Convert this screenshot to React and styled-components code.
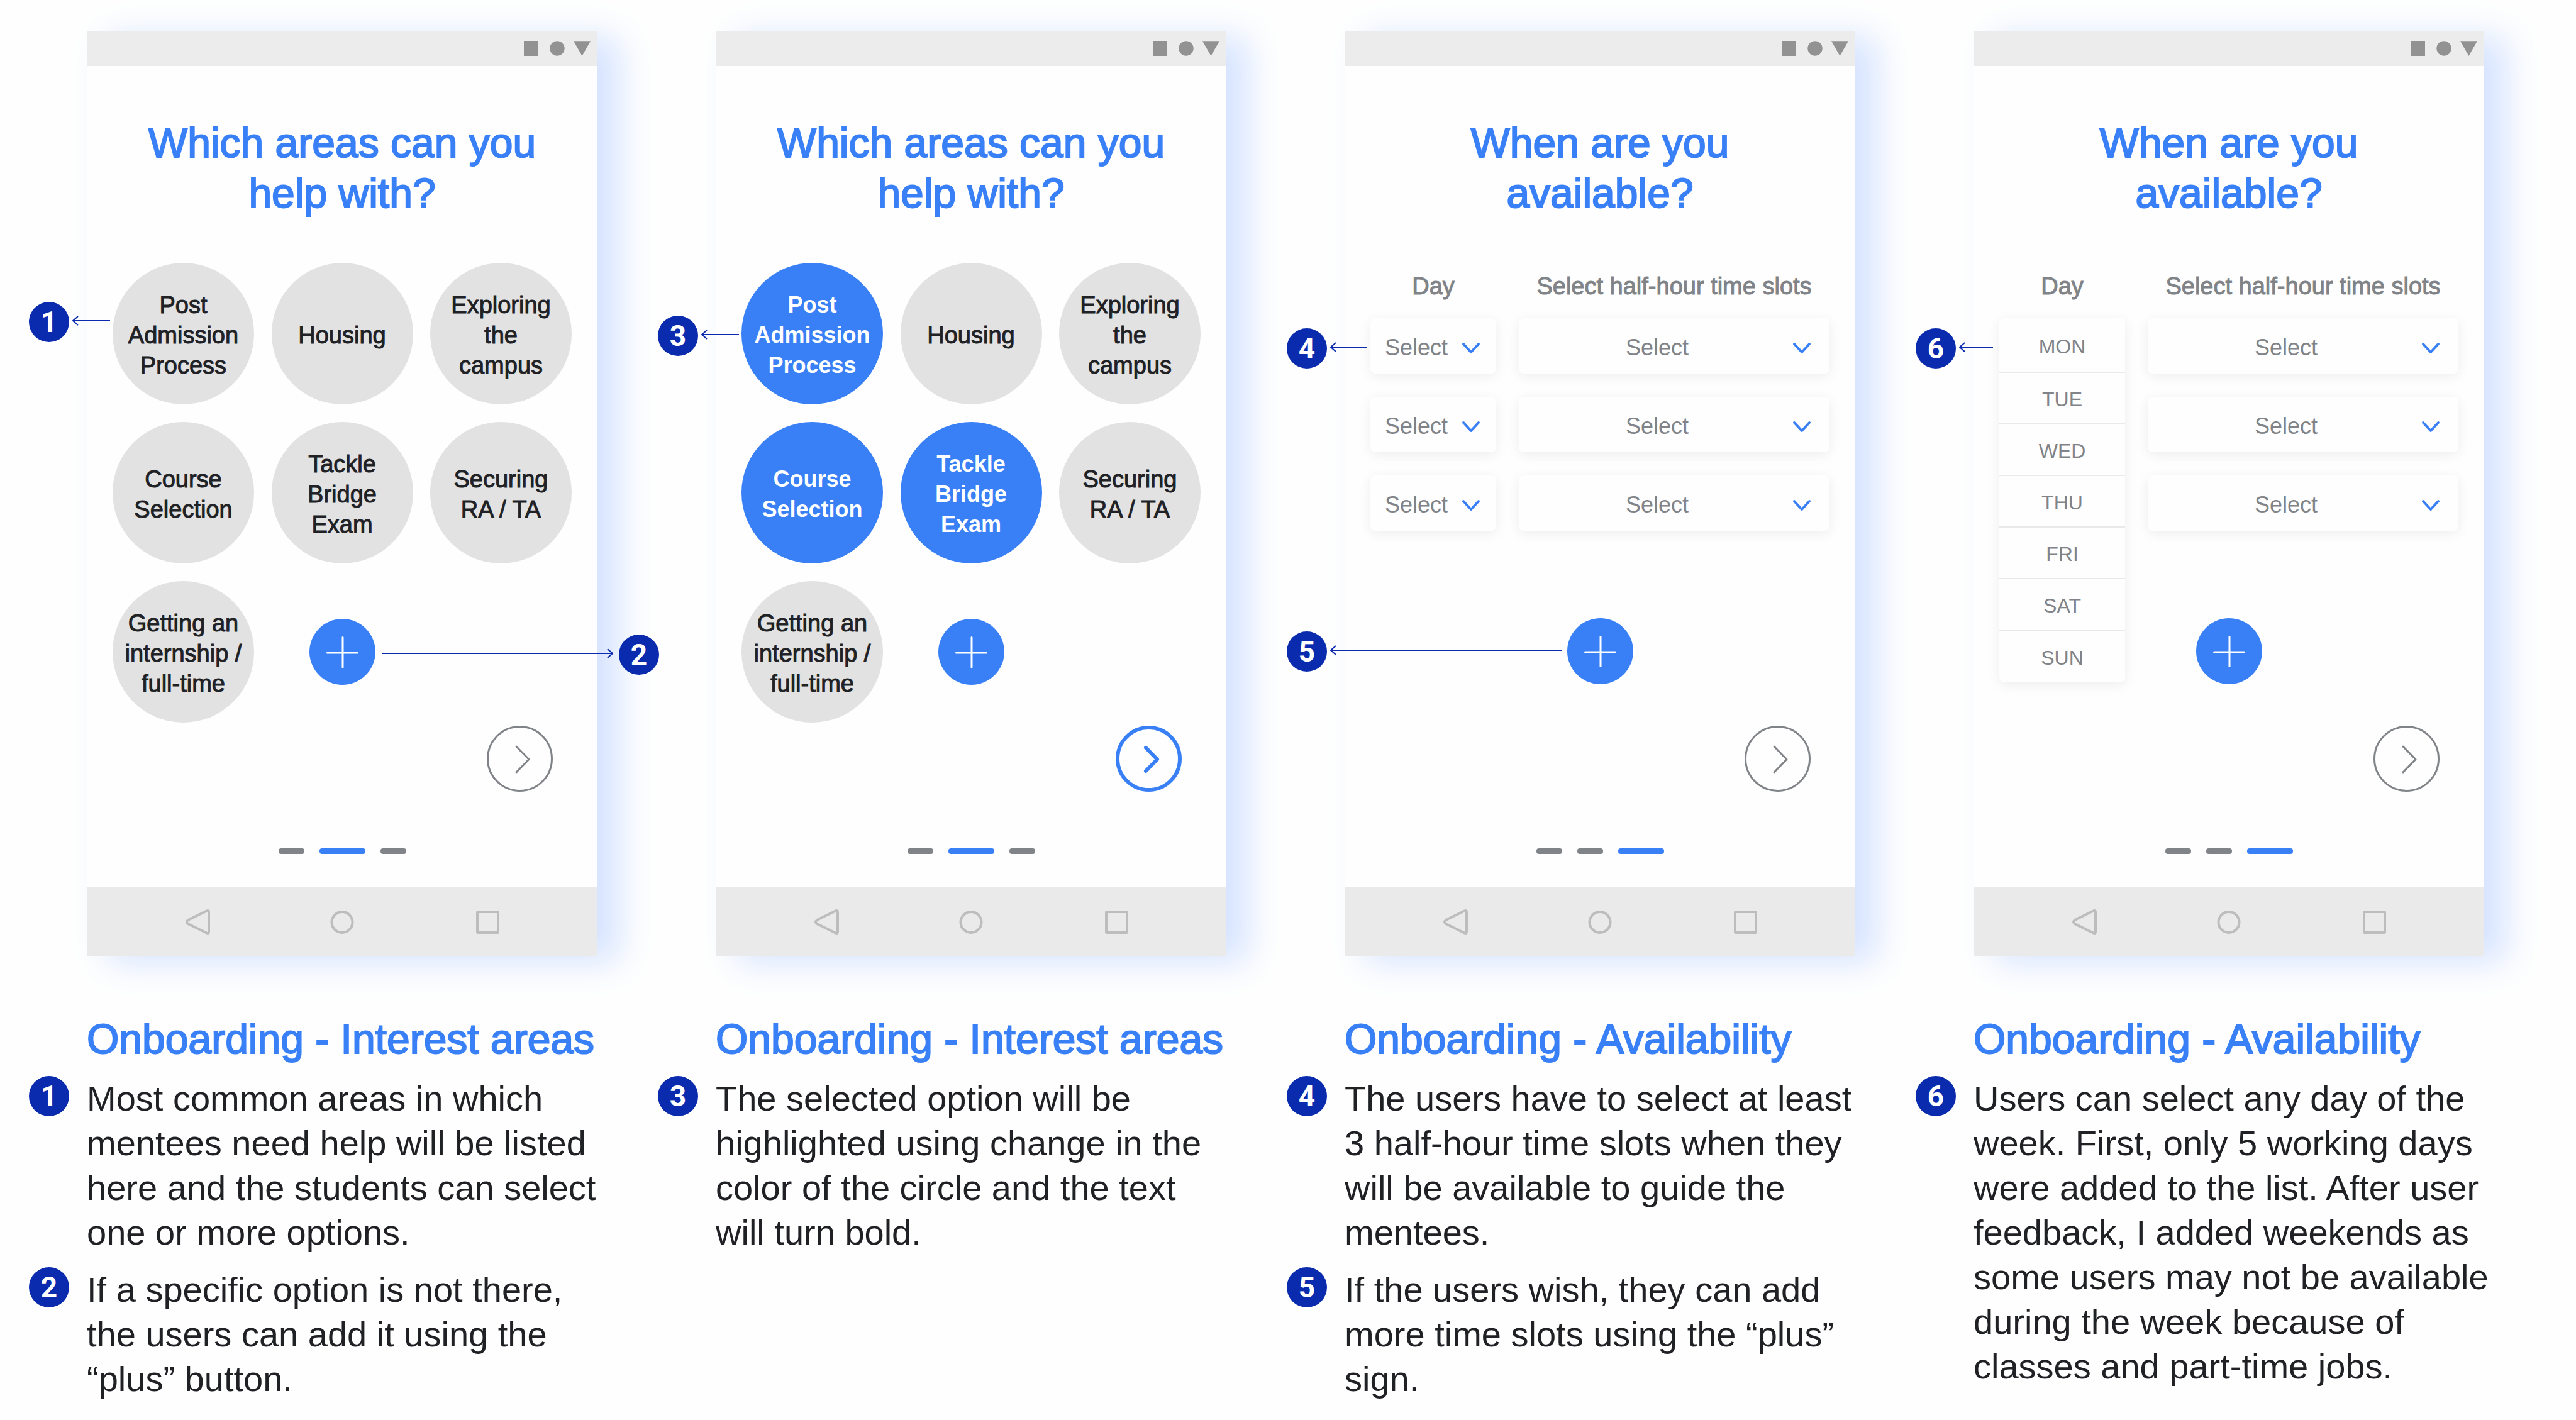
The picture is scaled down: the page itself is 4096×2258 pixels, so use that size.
import React from "react";
import styled, { createGlobalStyle, css } from "styled-components";

const blue = "#3980f7";
const navy = "#0a2bae";
const ink = "#202125";
const gray = "#808387";

const GlobalStyle = createGlobalStyle`
  *, *::before, *::after { box-sizing: border-box; }
  html, body { margin: 0; background: #fefefe; }
  body {
    font-family: "Liberation Sans", Arial, Helvetica, sans-serif;
    color: ${ink};
  }
  h1, h2, p, ul, ol { margin: 0; padding: 0; }
  ul, ol { list-style: none; }
  button, select { font: inherit; color: inherit; margin: 0; }
`;

/* Medium weight: the family only ships regular and bold. */
const medium = css`
  font-weight: 400;
  -webkit-text-stroke: ${(p) => p.$stroke || 1}px currentColor;
`;

const Page = styled.main`
  display: grid;
  grid-template-columns: repeat(4, minmax(0, 1fr));
  column-gap: 96px;
  padding: 49px 146px 20px 46px;
  overflow: hidden;
`;

const Column = styled.section`
  min-width: 0;
`;

const Mock = styled.div`
  position: relative;
  padding-left: 92px;
`;

const Phone = styled.article`
  display: flex;
  flex-direction: column;
  background: #fefefe;
  box-shadow: 34px 10px 52px #d5e3ff;
`;

const StatusBar = styled.div`
  display: flex;
  justify-content: flex-end;
  align-items: center;
  height: 56px;
  padding-right: 11px;
  background: #ececec;
`;

const Screen = styled.div`
  display: flex;
  flex-direction: column;
  padding: 82px 41px 53px;
`;

const ScreenTitle = styled.h1`
  ${medium}
  align-self: center;
  max-width: 640px;
  font-size: 66px;
  line-height: 80px;
  text-align: center;
  color: ${blue};
`;

const AreaGrid = styled.div`
  display: grid;
  grid-template-columns: repeat(3, 225px);
  grid-auto-rows: 225px;
  justify-content: space-between;
  place-items: center;
  row-gap: 28px;
  margin: 71px 0 5px;
`;

const Area = styled.button`
  ${medium}
  display: flex;
  align-items: center;
  justify-content: center;
  width: 225px;
  height: 225px;
  padding: 4px 10px 0;
  border: 0;
  border-radius: 50%;
  background: #e2e2e2;
  color: ${ink};
  font-size: 38px;
  line-height: 48px;
  text-align: center;
  white-space: pre;
  ${(p) =>
    p.$selected &&
    css`
      background: ${blue};
      color: #fff;
      font-size: 36px;
      font-weight: 700;
      -webkit-text-stroke: 0;
    `}
`;

const AddButton = styled.button`
  display: grid;
  place-items: center;
  width: 105px;
  height: 105px;
  padding: 0;
  border: 0;
  border-radius: 50%;
  background: ${blue};
`;

const NextButton = styled.button`
  display: grid;
  place-items: center;
  align-self: flex-end;
  width: 105px;
  height: 105px;
  margin-right: 30px;
  padding: 0 0 0 8px;
  border: ${(p) => (p.$active ? 6 : 3)}px solid ${(p) => (p.$active ? blue : gray)};
  border-radius: 50%;
  background: transparent;
  color: ${(p) => (p.$active ? blue : gray)};
`;

const Steps = styled.ol`
  display: flex;
  justify-content: center;
  gap: 24px;
  margin-top: 90px;
`;

const Step = styled.li`
  width: ${(p) => (p.$current ? 73 : 41)}px;
  height: 9px;
  border-radius: 4px;
  background: ${(p) => (p.$current ? blue : gray)};
`;

const NavBar = styled.nav`
  display: flex;
  justify-content: center;
  align-items: center;
  gap: 186px;
  height: 109px;
  background: #eaeaea;
`;

const NavButton = styled.button`
  display: grid;
  place-items: center;
  width: 44px;
  height: 44px;
  padding: 0;
  border: 0;
  background: none;
`;

const SlotForm = styled.form`
  display: grid;
  grid-template-columns: 200px 1fr;
  gap: 37px 36px;
  margin-top: 86px;
`;

const FieldLabel = styled.label`
  ${medium}
  margin-bottom: -8px;
  font-size: 38px;
  line-height: 44px;
  text-align: center;
  color: ${gray};
`;

const Field = styled.div`
  position: relative;
  height: 88px;
`;

const card = css`
  background: #fefefe;
  border: 0;
  border-radius: 8px;
  box-shadow: 0 4px 20px rgba(0, 0, 0, 0.07);
`;

const SelectBox = styled.select`
  ${card}
  appearance: none;
  width: 100%;
  height: 100%;
  padding: 5px 54px 0 0;
  font-size: 36px;
  line-height: 44px;
  text-align: center;
  text-align-last: center;
  color: ${gray};
`;

const FieldChevron = styled.svg`
  position: absolute;
  top: 37px;
  right: ${(p) => (p.$wide ? 28 : 24)}px;
  pointer-events: none;
`;

const DayMenu = styled.ul`
  ${card}
  position: absolute;
  top: 0;
  left: 0;
  right: 0;
  overflow: hidden;
`;

const DayItem = styled.li`
  height: 82px;
  border-bottom: 2px solid #e9e9ea;
  &:first-child { height: 87px; }
  &:last-child { border-bottom: 0; }
`;

const DayButton = styled.button`
  width: 100%;
  height: 100%;
  padding: 4px 0 0;
  border: 0;
  background: none;
  font-size: 32px;
  line-height: 40px;
  color: ${gray};
`;

const AddRow = styled.div`
  display: flex;
  justify-content: center;
  padding: 139px 0 66px;
`;

const Badge = styled.span`
  display: grid;
  place-items: center;
  flex: none;
  width: 64px;
  height: 64px;
  border-radius: 50%;
  background: ${navy};
  color: #fff;
  font-family: Roboto, "Liberation Sans", sans-serif;
  font-size: 46px;
  font-weight: 700;
  line-height: 64px;
`;

const CalloutBox = styled.div`
  position: absolute;
  top: ${(p) => p.$top}px;
  left: ${(p) => p.$left || 0}px;
  display: flex;
  flex-direction: ${(p) => (p.$reverse ? "row-reverse" : "row")};
  align-items: center;
  gap: ${(p) => (p.$reverse ? 9 : 5)}px;
  z-index: 2;
`;

const ArrowLine = styled.svg`
  margin-bottom: 4px;
`;

const Caption = styled.h2`
  ${medium}
  margin: 92px 0 19px 92px;
  font-size: 66px;
  line-height: 80px;
  white-space: nowrap;
  color: ${blue};
`;

const Notes = styled.ol`
  display: grid;
  gap: 20px;
`;

const Note = styled.li`
  display: grid;
  grid-template-columns: 64px 1fr;
  column-gap: 28px;
  align-items: start;
`;

const NoteText = styled.p`
  margin-right: -8px;
  font-size: 56px;
  line-height: 71px;
`;

function StatusIcons() {
  return (
    <svg width="106" height="24" viewBox="0 0 106 24" fill="#929292" aria-hidden="true">
      <rect x="0" y="0" width="23" height="24" />
      <circle cx="53" cy="12" r="11.7" />
      <path d="M79 0.3h27L92.5 24z" />
    </svg>
  );
}

function Arrow({ length, flip }) {
  return (
    <ArrowLine
      width={length}
      height="16"
      viewBox={`0 0 ${length} 16`}
      fill="none"
      stroke={navy}
      strokeWidth="2"
      aria-hidden="true"
    >
      {flip ? (
        <path d={`M0 8H${length - 1}M${length - 9} 1l8 7l-8 7`} />
      ) : (
        <path d={`M${length} 8H1M9 1L1 8l8 7`} />
      )}
    </ArrowLine>
  );
}

function Callout({ number, top, length, left, reverse }) {
  return (
    <CalloutBox $top={top} $left={left} $reverse={reverse}>
      <Badge>{number}</Badge>
      <Arrow length={length} flip={reverse} />
    </CalloutBox>
  );
}

function Add({ label }) {
  return (
    <AddButton type="button" aria-label={label}>
      <svg width="50" height="50" viewBox="0 0 50 50" stroke="#fff" strokeWidth="3" strokeLinecap="round" aria-hidden="true">
        <path d="M1.5 26H49M26 1.5V49" />
      </svg>
    </AddButton>
  );
}

function Next({ active }) {
  return (
    <NextButton type="button" aria-label="Next" $active={active}>
      <svg
        width="28"
        height="48"
        viewBox="0 0 28 48"
        fill="none"
        stroke="currentColor"
        strokeWidth={active ? 6 : 3}
        strokeLinecap="round"
        strokeLinejoin="round"
        aria-hidden="true"
      >
        <path d={active ? "M5 6l18 18.5L5 43" : "M4 4l20 20.5L4 45"} />
      </svg>
    </NextButton>
  );
}

function Pager({ current }) {
  return (
    <Steps>
      {[0, 1, 2].map((i) => (
        <Step key={i} $current={i === current} />
      ))}
    </Steps>
  );
}

function SystemNav() {
  const line = { fill: "none", stroke: "#bdbdbd", strokeWidth: 4, strokeLinejoin: "round" };
  return (
    <NavBar>
      <NavButton type="button" aria-label="Back">
        <svg width="44" height="44" viewBox="0 0 44 44" {...line}>
          <path d="M36.5 4.5Q40 3 40 6V38Q40 41 36.500 39.500L7 25Q3 22 7 19Z" />
        </svg>
      </NavButton>
      <NavButton type="button" aria-label="Home">
        <svg width="44" height="44" viewBox="0 0 44 44" {...line}>
          <circle cx="22" cy="22.5" r="16.5" />
        </svg>
      </NavButton>
      <NavButton type="button" aria-label="Recent apps">
        <svg width="44" height="44" viewBox="0 0 44 44" {...line}>
          <rect x="7" y="6" width="33" height="33" rx="1" />
        </svg>
      </NavButton>
    </NavBar>
  );
}

function PhoneFrame({ title, children, step, active }) {
  return (
    <Phone>
      <StatusBar>
        <StatusIcons />
      </StatusBar>
      <Screen>
        <ScreenTitle $stroke={2}>{title}</ScreenTitle>
        {children}
        <Next active={active} />
        <Pager current={step} />
      </Screen>
      <SystemNav />
    </Phone>
  );
}

const areas = [
  "Post\nAdmission\nProcess",
  "Housing",
  "Exploring\nthe\ncampus",
  "Course\nSelection",
  "Tackle\nBridge\nExam",
  "Securing\nRA / TA",
  "Getting an\ninternship /\nfull-time",
];

function InterestScreen({ selected = [] }) {
  return (
    <PhoneFrame title="Which areas can you help with?" step={1} active={selected.length > 0}>
      <AreaGrid>
        {areas.map((name, i) => (
          <Area
            key={name}
            type="button"
            aria-pressed={selected.includes(i)}
            $selected={selected.includes(i)}
          >
            {name}
          </Area>
        ))}
        <Add label="Add an area" />
      </AreaGrid>
    </PhoneFrame>
  );
}

function Dropdown({ id, label, wide }) {
  return (
    <Field>
      <SelectBox id={id} aria-label={label} defaultValue="">
        <option value="">Select</option>
      </SelectBox>
      <FieldChevron
        $wide={wide}
        width="32"
        height="22"
        viewBox="0 0 32 22"
        fill="none"
        stroke={blue}
        strokeWidth="4"
        strokeLinecap="round"
        strokeLinejoin="round"
        aria-hidden="true"
      >
        <path d="M4 4l12 13L28 4" />
      </FieldChevron>
    </Field>
  );
}

const days = ["MON", "TUE", "WED", "THU", "FRI", "SAT", "SUN"];

function AvailabilityScreen({ name, menuOpen }) {
  return (
    <PhoneFrame title="When are you available?" step={2}>
      <SlotForm>
        <FieldLabel as={menuOpen ? "span" : "label"} htmlFor={menuOpen ? undefined : `${name}-day-0`}>
          Day
        </FieldLabel>
        <FieldLabel htmlFor={`${name}-time-0`}>Select half-hour time slots</FieldLabel>
        {[0, 1, 2].map((row) => (
          <React.Fragment key={row}>
            {menuOpen ? (
              <Field>
                {row === 0 && (
                  <DayMenu aria-label="Day">
                    {days.map((day) => (
                      <DayItem key={day}>
                        <DayButton type="button">{day}</DayButton>
                      </DayItem>
                    ))}
                  </DayMenu>
                )}
              </Field>
            ) : (
              <Dropdown id={`${name}-day-${row}`} label={row ? `Day ${row + 1}` : undefined} />
            )}
            <Dropdown wide id={`${name}-time-${row}`} label={row ? `Time slot ${row + 1}` : undefined} />
          </React.Fragment>
        ))}
      </SlotForm>
      <AddRow>
        <Add label="Add a time slot" />
      </AddRow>
    </PhoneFrame>
  );
}

function Description({ title, notes }) {
  return (
    <>
      <Caption $stroke={2}>{title}</Caption>
      <Notes>
        {notes.map(([number, text]) => (
          <Note key={number}>
            <Badge>{number}</Badge>
            <NoteText>{text}</NoteText>
          </Note>
        ))}
      </Notes>
    </>
  );
}

export default function App() {
  return (
    <>
      <GlobalStyle />
      <Page>
        <Column>
          <Mock>
            <InterestScreen />
            <Callout number={1} top={431} length={60} />
            <Callout number={2} top={960} left={561} length={368} reverse />
          </Mock>
          <Description
            title="Onboarding - Interest areas"
            notes={[
              [1, "Most common areas in which mentees need help will be listed here and the students can select one or more options."],
              [2, "If a specific option is not there, the users can add it using the “plus” button."],
            ]}
          />
        </Column>
        <Column>
          <Mock>
            <InterestScreen selected={[0, 3, 4]} />
            <Callout number={3} top={453} length={60} />
          </Mock>
          <Description
            title="Onboarding - Interest areas"
            notes={[
              [3, "The selected option will be highlighted using change in the color of the circle and the text will turn bold."],
            ]}
          />
        </Column>
        <Column>
          <Mock>
            <AvailabilityScreen name="closed" />
            <Callout number={4} top={473} length={58} />
            <Callout number={5} top={955} length={368} />
          </Mock>
          <Description
            title="Onboarding - Availability"
            notes={[
              [4, "The users have to select at least 3 half-hour time slots when they will be available to guide the mentees."],
              [5, "If the users wish, they can add more time slots using the “plus” sign."],
            ]}
          />
        </Column>
        <Column>
          <Mock>
            <AvailabilityScreen name="open" menuOpen />
            <Callout number={6} top={473} length={54} />
          </Mock>
          <Description
            title="Onboarding - Availability"
            notes={[
              [6, "Users can select any day of the week. First, only 5 working days were added to the list. After user feedback, I added weekends as some users may not be available during the week because of classes and part-time jobs."],
            ]}
          />
        </Column>
      </Page>
    </>
  );
}
